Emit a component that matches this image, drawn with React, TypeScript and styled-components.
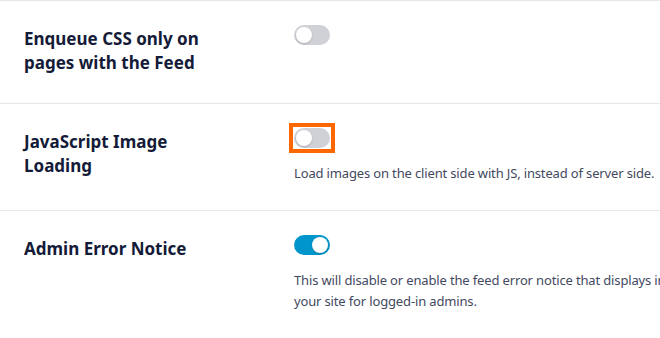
import React from "react";
import styled, { createGlobalStyle } from "styled-components";

const Global = createGlobalStyle`
  html, body { margin: 0; padding: 0; background: #ffffff; }
  body { font-family: "Noto Sans", "Open Sans", sans-serif; -webkit-font-smoothing: antialiased; }
`;

const Page = styled.div`
  width: 660px;
  height: 338px;
  overflow: hidden;
  background: #ffffff;
  border-top: 1px solid #e7e7ea;
  box-sizing: border-box;
`;

const Row = styled.div<{ $pb: number; $last?: boolean }>`
  display: grid;
  grid-template-columns: 270px 1fr;
  align-items: start;
  padding: 24px 0 ${(p) => p.$pb}px 24px;
  border-bottom: ${(p) => (p.$last ? "none" : "1px solid #e7e7ea")};
`;

const Title = styled.h3`
  margin: 2px 0 0;
  width: 200px;
  font-size: 17px;
  line-height: 24px;
  font-weight: 700;
  color: #141b38;
`;

const Control = styled.div`
  display: flex;
  flex-direction: column;
  align-items: flex-start;
  min-width: 0;
`;

const FocusRing = styled.span<{ $focus?: boolean }>`
  display: inline-flex;
  outline: ${(p) => (p.$focus ? "4px solid #fe6600" : "none")};
  outline-offset: 1px;
`;

const Track = styled.span<{ $on?: boolean }>`
  position: relative;
  display: inline-block;
  width: 36px;
  height: 20px;
  border-radius: 10px;
  background: ${(p) => (p.$on ? "#0096cc" : "#d0d1d7")};
  flex-shrink: 0;
`;

const Knob = styled.span<{ $on?: boolean }>`
  position: absolute;
  top: 2px;
  left: ${(p) => (p.$on ? "18px" : "2px")};
  width: 16px;
  height: 16px;
  border-radius: 50%;
  background: #ffffff;
  box-shadow: 0 1px 2px rgba(0, 0, 0, 0.18);
`;

const Desc = styled.p`
  margin: 15px 0 0;
  font-size: 13px;
  letter-spacing: -0.15px;
  line-height: 21px;
  color: #434960;
  white-space: nowrap;
`;

type Item = { title: string; on: boolean; focus?: boolean; desc?: string[]; pb: number };

const items: Item[] = [
  { title: "Enqueue CSS only on pages with the Feed", on: false, pb: 28 },
  {
    title: "JavaScript Image Loading",
    on: false,
    focus: true,
    pb: 26,
    desc: ["Load images on the client side with JS, instead of server side."],
  },
  {
    title: "Admin Error Notice",
    on: true,
    pb: 24,
    desc: [
      "This will disable or enable the feed error notice that displays in the bottom right corner of",
      "your site for logged-in admins.",
    ],
  },
];

export default function App() {
  return (
    <>
      <Global />
      <Page>
        {items.map((it, i) => (
          <Row key={it.title} $pb={it.pb} $last={i === items.length - 1}>
            <Title>{it.title}</Title>
            <Control>
              <FocusRing $focus={it.focus}>
                <Track $on={it.on}>
                  <Knob $on={it.on} />
                </Track>
              </FocusRing>
              {it.desc && (
                <Desc>
                  {it.desc.map((d, j) => (
                    <React.Fragment key={j}>
                      {d}
                      {j < it.desc!.length - 1 && <br />}
                    </React.Fragment>
                  ))}
                </Desc>
              )}
            </Control>
          </Row>
        ))}
      </Page>
    </>
  );
}
